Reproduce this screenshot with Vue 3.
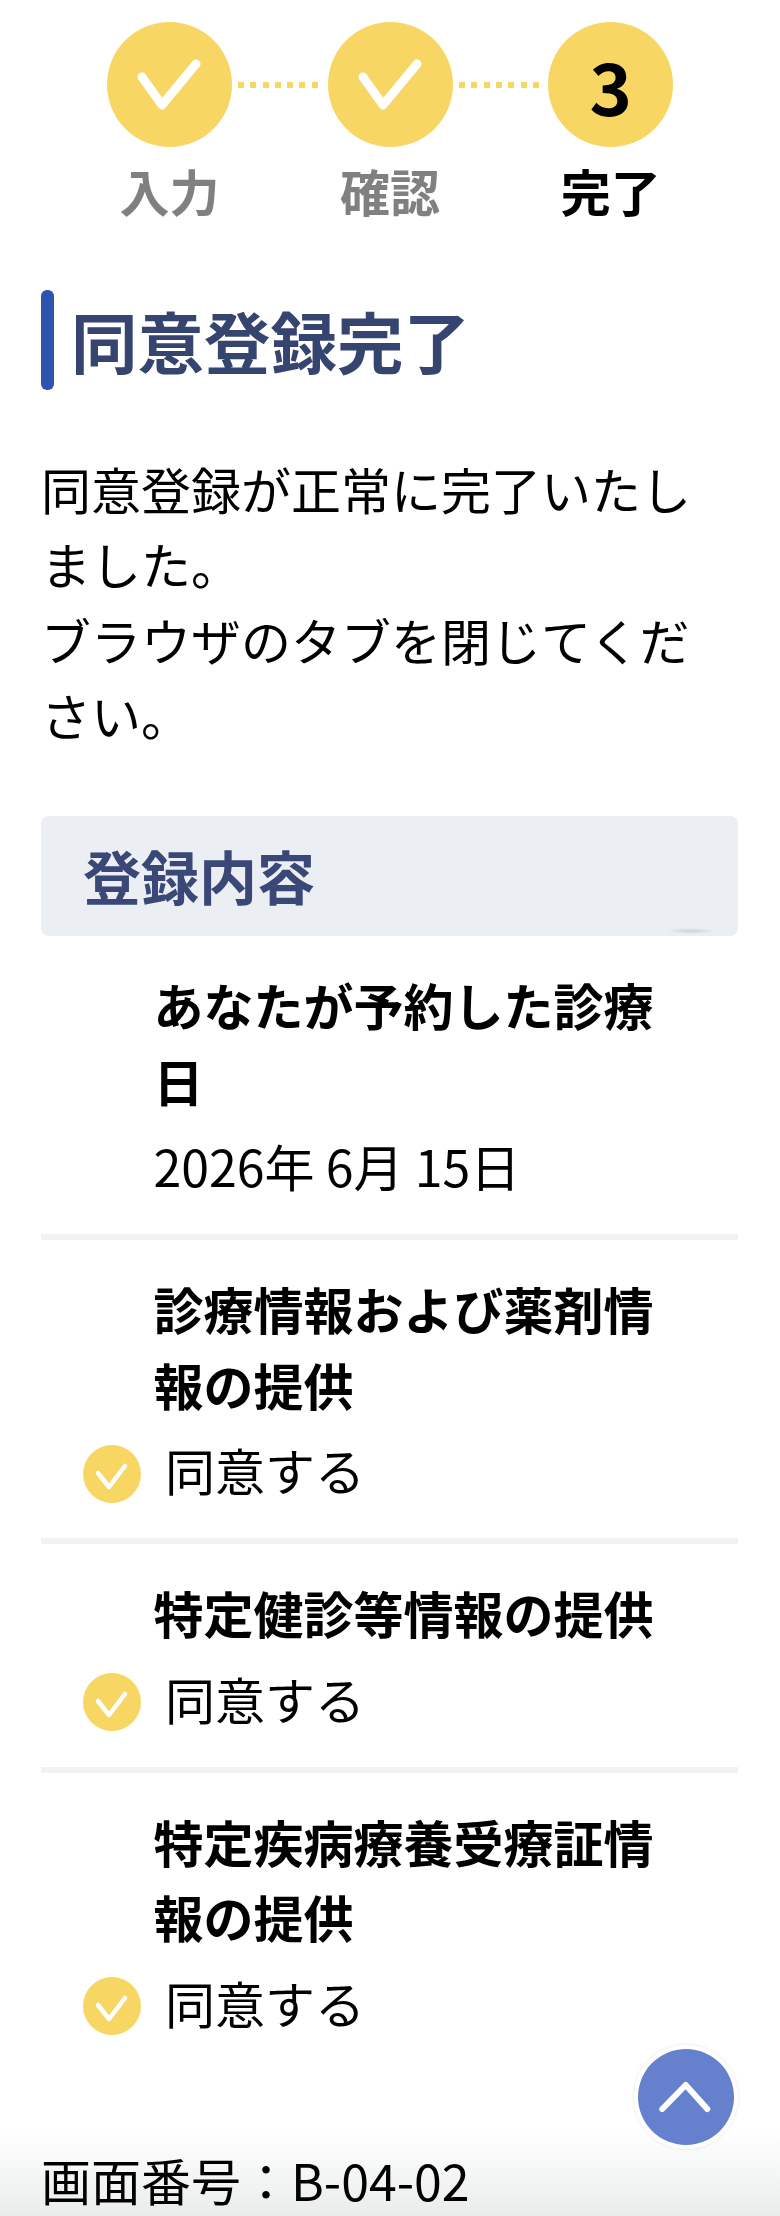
<script setup>
const steps = [
  { label: '入力', done: true },
  { label: '確認', done: true },
  { label: '完了', done: false, num: '3' },
]
const items = [
  { title: 'あなたが予約した診療日', value: '2026年 6月 15日', check: false },
  { title: '診療情報および薬剤情報の提供', value: '同意する', check: true },
  { title: '特定健診等情報の提供', value: '同意する', check: true },
  { title: '特定疾病療養受療証情報の提供', value: '同意する', check: true },
]
</script>

<template>
  <div class="page">
    <div class="stepper">
      <template v-for="(s, i) in steps" :key="s.label">
        <div class="step" :class="{ current: !s.done }">
          <div class="circle">
            <svg v-if="s.done" viewBox="0 0 125 125" class="tick">
              <path d="M35 55 L55 83 L89 42" />
            </svg>
            <span v-else class="num">{{ s.num }}</span>
          </div>
          <div class="label">{{ s.label }}</div>
        </div>
        <div v-if="i < 2" class="dots"></div>
      </template>
    </div>

    <h1 class="heading">同意登録完了</h1>
    <p class="lead">同意登録が正常に完了いたしました。<br />ブラウザのタブを閉じてください。</p>

    <div class="panel">
      <h2 class="panel-title">登録内容</h2>
      <span class="panel-shade"></span>
    </div>

    <div v-for="(it, i) in items" :key="it.title" class="item" :class="{ last: i === items.length - 1 }">
      <div class="item-title">{{ it.title }}</div>
      <div v-if="it.check" class="agree">
        <svg viewBox="0 0 58 58" class="agree-icon">
          <circle cx="29" cy="29" r="29" fill="#f8d664" />
          <path d="M15 28 L26 42 L42 21" />
        </svg>
        <span>{{ it.value }}</span>
      </div>
      <div v-else class="item-value">{{ it.value }}</div>
    </div>

    <p class="screen-id">画面番号：B-04-02</p>

    <div class="fade"></div>
    <div class="to-top">
      <svg viewBox="0 0 96 96" class="to-top-icon">
        <path d="M24.3 60 L47.7 36 L69.3 60" />
      </svg>
    </div>
  </div>
</template>

<style scoped>
.page {
  position: relative;
  height: 2216px;
  overflow: hidden;
  background: #fff;
  color: #000;
  padding: 22px 42px 0 41px;
  box-sizing: border-box;
  font-family: "Noto Sans CJK JP", "Noto Sans", sans-serif;
}
.stepper {
  display: flex;
  margin-left: 66px;
}
.step {
  width: 125px;
  display: flex;
  flex-direction: column;
  align-items: center;
}
.circle {
  width: 125px;
  height: 125px;
  border-radius: 50%;
  background: #f8d664;
  display: flex;
  align-items: center;
  justify-content: center;
}
.tick {
  width: 125px;
  height: 125px;
}
.tick path {
  fill: none;
  stroke: #fff;
  stroke-width: 9;
  stroke-linecap: round;
  stroke-linejoin: round;
}
.num {
  font-size: 72px;
  font-weight: 700;
  line-height: 1;
}
.label {
  margin-top: 13px;
  font-size: 50px;
  line-height: 60px;
  font-weight: 700;
  color: #808080;
  white-space: nowrap;
}
.current .label {
  color: #000;
}
.dots {
  width: 95.6px;
  height: 6px;
  margin-top: 60px;
  background: repeating-linear-gradient(90deg, #f8d664 0 6px, transparent 6px 12.3px) 6px 0 / 80px 100% no-repeat;
}
.heading {
  margin: 70px 0 0;
  height: 100px;
  padding-left: 30px;
  position: relative;
  font-size: 66.5px;
  line-height: 100px;
  font-weight: 700;
  color: #36456f;
  white-space: nowrap;
}
.heading::before {
  content: "";
  position: absolute;
  left: 0;
  top: 0;
  width: 13px;
  height: 100px;
  border-radius: 6px;
  background: #2e55ad;
}
.lead {
  margin: 61px 0 0;
  font-size: 50px;
  line-height: 75.3px;
}
.panel {
  position: relative;
  margin-top: 64px;
  height: 120px;
  border-radius: 8px;
  background: #ebeef3;
  padding-left: 42px;
  box-sizing: border-box;
  overflow: hidden;
}
.panel-title {
  margin: 0;
  font-size: 58px;
  line-height: 118px;
  font-weight: 700;
  color: #3a4878;
}
.panel-shade {
  position: absolute;
  left: 625px;
  bottom: 2px;
  width: 50px;
  height: 6px;
  border-radius: 50%;
  background: radial-gradient(closest-side, #cfd1d4, rgba(235, 238, 243, 0));
}
.item {
  padding: 31px 0 31px;
  border-bottom: 6px solid #f2f2f2;
}
.item.last {
  border-bottom: 0;
}
.item-title {
  margin-left: 112.5px;
  width: 510px;
  font-size: 50px;
  line-height: 75.5px;
  font-weight: 700;
}
.item-value {
  margin: 10px 0 0 112.5px;
  font-size: 50px;
  line-height: 75px;
}
.agree {
  margin: 10px 0 0 42px;
  display: flex;
  align-items: center;
  gap: 24px;
  font-size: 50px;
  line-height: 75px;
}
.agree-icon {
  width: 58px;
  height: 58px;
  flex: none;
  margin-top: 8px;
}
.agree-icon path {
  fill: none;
  stroke: #fff;
  stroke-width: 4.5;
  stroke-linecap: round;
  stroke-linejoin: round;
}
.screen-id {
  position: relative;
  z-index: 1;
  margin: 71px 0 0;
  font-size: 50px;
  line-height: 75px;
  white-space: nowrap;
}
.fade {
  position: absolute;
  left: 0;
  right: 0;
  bottom: 0;
  height: 85px;
  background: linear-gradient(rgba(234, 236, 236, 0), #eaecec);
  pointer-events: none;
}
.to-top {
  position: absolute;
  z-index: 2;
  right: 46px;
  top: 2049px;
  width: 96px;
  height: 96px;
  border-radius: 50%;
  background: #6580cc;
  box-shadow: 0 0 0 4px #fff, 0 0 3px 5px rgba(0, 0, 0, 0.06);
}
.to-top-icon {
  display: block;
  width: 96px;
  height: 96px;
}
.to-top-icon path {
  fill: none;
  stroke: #fff;
  stroke-width: 6;
  stroke-linecap: round;
  stroke-linejoin: round;
}
</style>

<style>
html, body {
  margin: 0;
  padding: 0;
  background: #fff;
}
</style>
